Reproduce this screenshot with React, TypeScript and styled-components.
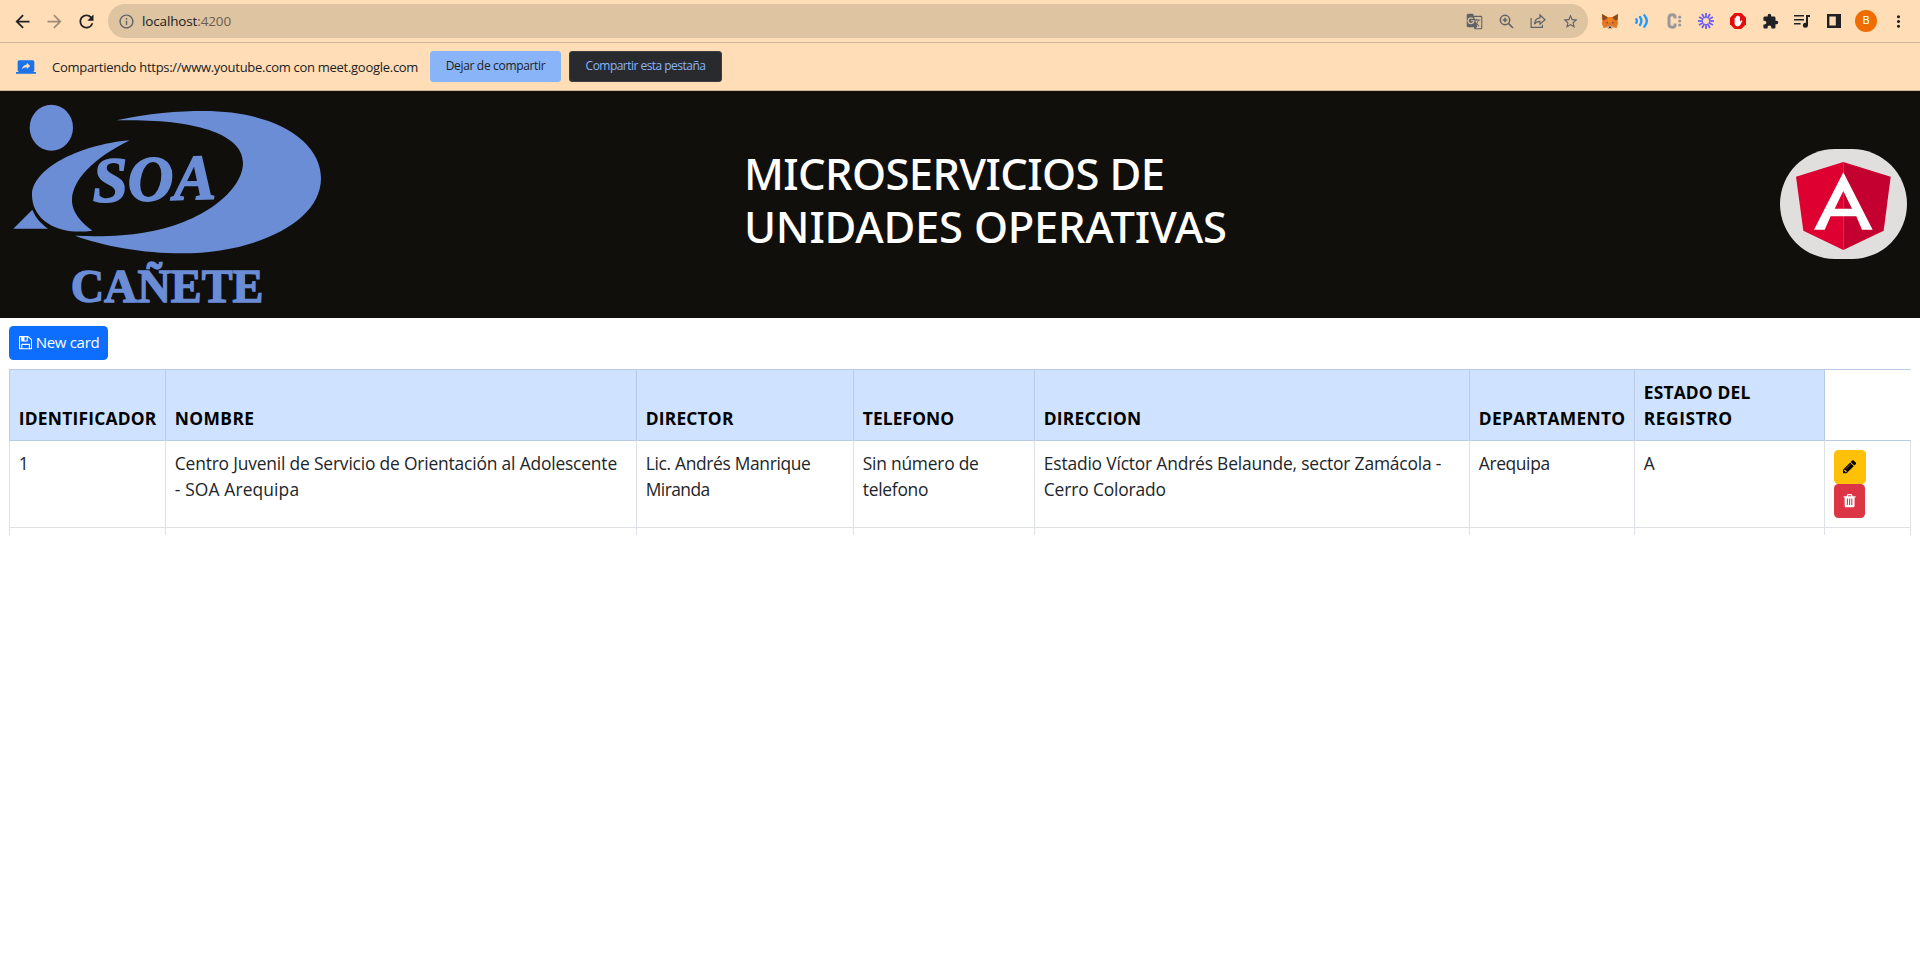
import React from 'react';
import styled, { createGlobalStyle } from 'styled-components';
import {
  MdArrowBack,
  MdArrowForward,
  MdRefresh,
  MdInfoOutline,
  MdGTranslate,
  MdStarBorder,
  MdExtension,
  MdMoreVert,
  MdScreenShare,
} from 'react-icons/md';

const GlobalStyle = createGlobalStyle`
  *, *::before, *::after { box-sizing: border-box; }
  body {
    margin: 0;
    background: #fff;
    color: #212529;
    font-family: "Open Sans", "Noto Sans", sans-serif;
  }
  svg { display: block; flex: none; }
`;

/* ---------- browser chrome ---------- */

const Toolbar = styled.div`
  display: flex;
  align-items: center;
  height: 43px;
  padding: 4px 6px;
  background: #ffddb6;
  border-bottom: 1px solid #cbb497;
`;

const IconSlot = styled.span<{ $color?: string }>`
  display: flex;
  flex: none;
  align-items: center;
  justify-content: center;
  width: 32px;
  height: 34px;
  color: ${(p) => p.$color ?? '#202124'};
`;

const AddressBar = styled.div`
  display: flex;
  flex: 1;
  align-items: center;
  height: 34px;
  margin: 0 6px;
  padding: 0 2px;
  border-radius: 17px;
  background: #dec4a1;
`;

const Url = styled.span`
  flex: 1;
  font-size: 13.5px;
  line-height: 20px;
  letter-spacing: -0.14px;
  color: #202124;
`;

const Port = styled.span`
  color: #6a5f53;
`;

const Avatar = styled.span`
  display: flex;
  align-items: center;
  justify-content: center;
  width: 22px;
  height: 22px;
  border-radius: 50%;
  background: #ef6c00;
  color: #fff;
  font: 400 11.5px/1 Roboto, sans-serif;
`;

const ShareBar = styled.div`
  display: flex;
  align-items: center;
  height: 48px;
  padding: 0 16px;
  background: #ffddb6;
  border-bottom: 1px solid #cbb497;
`;

const ShareText = styled.span`
  margin: 1px 13px 0 16px;
  width: 365px;
  white-space: nowrap;
  font-size: 13px;
  letter-spacing: -0.28px;
  color: #202124;
`;

const ShareButton = styled.button<{ $dark?: boolean }>`
  width: ${(p) => (p.$dark ? 153 : 131)}px;
  height: 31px;
  margin: 0 8px 0 0;
  padding: 0 0 2px;
  border: 1px solid ${(p) => (p.$dark ? '#3c4043' : '#8ab4f8')};
  border-radius: 3px;
  background: ${(p) => (p.$dark ? '#292a2d' : '#8ab4f8')};
  color: ${(p) => (p.$dark ? '#8ab4f8' : '#202124')};
  font: 400 12px "Open Sans", sans-serif;
  letter-spacing: ${(p) => (p.$dark ? -0.53 : -0.33)}px;
  white-space: nowrap;
`;

/* ---------- page banner ---------- */

const Banner = styled.header`
  display: grid;
  grid-template-columns: 744px 1fr 127px;
  align-items: center;
  height: 227px;
  padding-right: 13px;
  background: #110f0b;
`;

const Title = styled.h1`
  margin: 0;
  padding-bottom: 9px;
  color: #fff;
  font: 500 43.5px/53px "Noto Sans", sans-serif;
`;

const TitleLine = styled.span<{ $tracking: number }>`
  display: block;
  white-space: nowrap;
  letter-spacing: ${(p) => p.$tracking}px;
`;

const Badge = styled.div`
  width: 127px;
  height: 110px;
  margin-bottom: 1px;
  border-radius: 55px;
  background: #e1dfdd;
  overflow: hidden;
`;

/* ---------- content ---------- */

const Content = styled.main`
  padding: 8px 9px;
`;

const Button = styled.button<{ $bg: string; $fg?: string; $width: number }>`
  display: flex;
  align-items: center;
  gap: 4px;
  width: ${(p) => p.$width}px;
  height: 34px;
  padding: 0 9.5px;
  border: 0;
  border-radius: 4.4px;
  background: ${(p) => p.$bg};
  color: ${(p) => p.$fg ?? '#fff'};
  font: 400 15px/23px "Open Sans", sans-serif;
  letter-spacing: -0.3px;
  white-space: nowrap;
`;

const ButtonLabel = styled.span`
  padding-bottom: 1px;
`;

const TableFrame = styled.div`
  height: 166px;
  margin-top: 9px;
  overflow: hidden;
`;

const Table = styled.table`
  width: 1902px;
  table-layout: fixed;
  border-collapse: separate;
  border-spacing: 0;
  font-size: 17.4px;
  line-height: 26.4px;
`;

const Col = styled.col<{ $w: number }>`
  width: ${(p) => p.$w}px;
`;

const HeadCell = styled.th<{ $empty?: boolean }>`
  height: 71px;
  padding: 8px 0 9px 8.8px;
  line-height: 26px;
  vertical-align: bottom;
  text-align: left;
  font-weight: 700;
  color: #000;
  background: ${(p) => (p.$empty ? '#fff' : '#cfe2ff')};
  border: solid #bacbe6;
  border-width: 1px 0 0 1px;
`;

const Cell = styled.td<{ $first?: boolean }>`
  height: 87px;
  padding: 9px 0 8px 8.8px;
  vertical-align: top;
  border: solid #dee2e6;
  border-width: 1px 0 0 1px;
  border-top-color: ${(p) => (p.$first ? '#bacbe6' : '#dee2e6')};
  &:last-child { border-right-width: 1px; }
`;

const Phrase = styled.span<{ $tracking: number }>`
  display: block;
  white-space: nowrap;
  letter-spacing: ${(p) => p.$tracking}px;
`;

/* ---------- drawings ---------- */

const BLUE = '#6b8dd6';

const SoaLogo = () => (
  <svg width="340" height="227" viewBox="0 3 1020 681" fill={BLUE}>
    <ellipse cx="154" cy="113" rx="65" ry="69" />
    <path d="M350 91C440 70 540 63 610 63C830 63 963 155 963 265C963 400 760 490 545 490C430 490 310 468 225 437C310 441 380 436 430 428C610 400 729 300 729 218C729 130 580 85 350 91Z" />
    <path d="M389 151C230 165 96 240 96 315C96 385 165 438 277 422C225 385 215 350 216 328C218 270 280 205 389 151Z" />
    <path d="M97 359L40 416H144C122 400 106 382 97 359Z" />
    <text
      x="279"
      y="336"
      transform="rotate(-1.6 279 336)"
      textLength="370"
      lengthAdjust="spacingAndGlyphs"
      fontFamily="Liberation Serif, serif"
      fontWeight="700"
      fontStyle="italic"
      fontSize="192"
      stroke={BLUE}
      strokeWidth="5"
    >
      SOA
    </text>
    <text
      x="212"
      y="635"
      textLength="578"
      lengthAdjust="spacingAndGlyphs"
      fontFamily="Liberation Serif, serif"
      fontWeight="700"
      fontSize="142"
      stroke={BLUE}
      strokeWidth="4"
    >
      CAÑETE
    </text>
  </svg>
);

const AngularLogo = () => (
  <svg width="127" height="110" viewBox="60 57 381 330">
    <path fill="#dd0031" d="M250 96L108 140L130 302L250 360Z" />
    <path fill="#c3002f" d="M250 96L392 140L371 302L250 360Z" />
    <path
      fill="#fff"
      fillRule="evenodd"
      d="M250 127L162 299H194L212 259H289L306 299H338ZM250 183L276 236H224Z"
    />
  </svg>
);

const ZoomIcon = () => (
  <svg width="15" height="15" viewBox="0 0 15 15" fill="none" stroke="currentColor" strokeWidth="1.5">
    <circle cx="6" cy="6" r="4.7" />
    <path d="M9.4 9.4L14 14M3.8 6H8.2M6 3.8V8.2" />
  </svg>
);

const ShareIcon = () => (
  <svg width="16" height="16" viewBox="0 0 16 16" fill="none" stroke="currentColor" strokeWidth="1.2">
    <path d="M1.1 5V14.4H12.4V11.8" />
    <path d="M4.4 11.2C4.9 7.2 7 5 10 4.9V2L15 6.8L10 11.2V8.4C7.6 8.3 5.8 9.2 4.4 11.2Z" />
  </svg>
);

const FoxIcon = () => (
  <svg width="16" height="15" viewBox="0 0 16 15">
    <path fill="#e27625" d="M0 0L5.5 3H10.5L16 0L15.6 6L16 9.5L14.5 14L11 13.2L9.5 14.8H6.5L5 13.2L1.5 14L0 9.5L.4 6Z" />
    <path fill="#8a4a1d" d="M0 0L6 3.4L2.5 6.2L.4 6ZM16 0L10 3.4L13.5 6.2L15.6 6Z" />
    <path fill="#f5841f" d="M5.5 3H10.5L9.6 8.5H6.4Z" />
    <path fill="#d7c1b3" d="M5 12.4L8 11.4L11 12.4L9.5 14.6H6.5Z" />
    <path fill="#2f343b" d="M6.7 12.4H9.3L9 14H7ZM4 8L6 8.8L5.8 9.7ZM12 8L10 8.8L10.2 9.7Z" />
  </svg>
);

const WavesIcon = () => (
  <svg width="14" height="14" viewBox="0 0 14 14" fill="none" stroke="#1a9bff" strokeWidth="2.3" strokeLinecap="round">
    <path d="M1.3 5.2Q2.5 7 1.3 8.8M5 3Q7.8 7 5 11M9.3 1.3Q14.4 7 9.3 12.7" />
  </svg>
);

const CaptionIcon = () => (
  <svg width="15" height="16" viewBox="0 0 15 16">
    <path fill="none" stroke="#999" strokeWidth="3" d="M8 5.5V4Q8 1.8 5.2 1.8T2 4.4V11.6Q2 14.2 5.2 14.2T8 12V10.5" />
    <g fill="#999">
      <circle cx="12.7" cy="4" r="1.6" />
      <circle cx="12.7" cy="8" r="1.6" />
      <circle cx="12.7" cy="12" r="1.6" />
    </g>
  </svg>
);

const BurstIcon = () => (
  <svg width="16" height="16" viewBox="-8 -8 16 16" stroke="#6c5cf5" strokeWidth="1.8">
    {Array.from({ length: 12 }, (_, i) => (
      <line key={i} x1="0" y1="-3" x2="0" y2="-8" transform={`rotate(${i * 30})`} />
    ))}
  </svg>
);

const StopHandIcon = () => (
  <svg width="16" height="16" viewBox="0 0 16 16">
    <path fill="#e40d0d" d="M4.7 0H11.3L16 4.7V11.3L11.3 16H4.7L0 11.3V4.7Z" />
    <path
      fill="#fff"
      d="M4.6 5.2Q5.3 4.5 5.9 5.2V3.6Q6.6 2.8 7.2 3.5V2.9Q7.9 2.1 8.6 2.9V3.5Q9.4 2.8 10 3.7V8.6L11.2 7.4Q12.2 7 12.4 7.8L10.6 11.6Q9.8 13.4 7.8 13.4Q4.6 13.2 4.6 10Z"
    />
  </svg>
);

const PlaylistIcon = () => (
  <svg width="16" height="14" viewBox="0 0 16 14" fill="none" stroke="#202124" strokeWidth="1.6">
    <path d="M0 1.8H10M0 5.8H10M0 9.8H6.6" />
    <path d="M13 11.5V1.9H16" strokeWidth="2" />
    <circle cx="11.4" cy="11.3" r="2.5" fill="#202124" stroke="none" />
  </svg>
);

const SidePanelIcon = () => (
  <svg width="14" height="14" viewBox="0 0 14 14">
    <path fill="#202124" fillRule="evenodd" d="M0 0H14V14H0ZM2.4 2.4V11.6H8.8V2.4Z" />
  </svg>
);

const SaveIcon = () => (
  <svg width="13.2" height="15.4" viewBox="0 0 1536 1792" fill="currentColor">
    <path d="M384 1536h768v-384h-768v384zm896 0h128v-896q0-14-10-38.5t-20-34.5l-281-281q-10-10-34-20t-39-10v416q0 40-28 68t-68 28h-576q-40 0-68-28t-28-68v-416h-128v1280h128v-416q0-40 28-68t68-28h832q40 0 68 28t28 68v416zm-384-928v-320q0-13-9.5-22.5t-22.5-9.5h-192q-13 0-22.5 9.5t-9.5 22.5v320q0 13 9.5 22.5t22.5 9.5h192q13 0 22.5-9.5t9.5-22.5zm640 32v928q0 40-28 68t-68 28h-1344q-40 0-68-28t-28-68v-1344q0-40 28-68t68-28h928q40 0 88 20t76 48l280 280q28 28 48 76t20 88z" />
  </svg>
);

const PencilIcon = () => (
  <svg width="15.4" height="15.4" viewBox="128 0 1792 1792" fill="currentColor">
    <path d="M491 1536l91-91-235-235-91 91v107h128v128h107zm523-928q0-22-22-22-10 0-17 7l-542 542q-7 7-7 17 0 22 22 22 10 0 17-7l542-542q7-7 7-17zm-54-192l416 416-832 832h-416v-416zm683 96q0 53-37 90l-166 166-416-416 166-165q36-38 90-38 53 0 91 38l235 234q37 39 37 91z" />
  </svg>
);

const TrashIcon = () => (
  <svg width="15.4" height="15.4" viewBox="128 0 1792 1792" fill="currentColor">
    <path d="M704 1376v-704q0-14-9-23t-23-9h-64q-14 0-23 9t-9 23v704q0 14 9 23t23 9h64q14 0 23-9t9-23zm256 0v-704q0-14-9-23t-23-9h-64q-14 0-23 9t-9 23v704q0 14 9 23t23 9h64q14 0 23-9t9-23zm256 0v-704q0-14-9-23t-23-9h-64q-14 0-23 9t-9 23v704q0 14 9 23t23 9h64q14 0 23-9t9-23zm-544-992h448l-48-117q-7-9-17-11h-317q-10 2-17 11zm928 32v64q0 14-9 23t-23 9h-96v948q0 83-47 143.5t-113 60.5h-832q-66 0-113-58.5t-47-141.5v-952h-96q-14 0-23-9t-9-23v-64q0-14 9-23t23-9h309l70-167q15-37 54-63t79-26h320q40 0 79 26t54 63l70 167h309q14 0 23 9t9 23z" />
  </svg>
);

/* ---------- data ---------- */

type Text = [text: string, tracking: number];

const columns: { width: number; head: Text[]; value: Text[] }[] = [
  { width: 156, head: [['IDENTIFICADOR', 0.22]], value: [['1', 0]] },
  {
    width: 471,
    head: [['NOMBRE', 0.4]],
    value: [
      ['Centro Juvenil de Servicio de Orientación al Adolescente', -0.175],
      ['- SOA Arequipa', 0.13],
    ],
  },
  {
    width: 217,
    head: [['DIRECTOR', 0.179]],
    value: [['Lic. Andrés Manrique', -0.333], ['Miranda', -0.568]],
  },
  {
    width: 181,
    head: [['TELEFONO', 0.086]],
    value: [['Sin número de', -0.228], ['telefono', -0.271]],
  },
  {
    width: 435,
    head: [['DIRECCION', 0.2]],
    value: [
      ['Estadio Víctor Andrés Belaunde, sector Zamácola -', -0.175],
      ['Cerro Colorado', -0.138],
    ],
  },
  { width: 165, head: [['DEPARTAMENTO', 0.28]], value: [['Arequipa', -0.372]] },
  { width: 190, head: [['ESTADO DEL', 0.163], ['REGISTRO', 0.55]], value: [['A', 0]] },
];

const Phrases = ({ lines }: { lines: Text[] }) => (
  <>
    {lines.map(([text, tracking]) => (
      <Phrase key={text} $tracking={tracking}>
        {text}
      </Phrase>
    ))}
  </>
);

export default function App() {
  return (
    <>
      <GlobalStyle />
      <Toolbar>
        <IconSlot><MdArrowBack size={21} /></IconSlot>
        <IconSlot $color="#a08d78"><MdArrowForward size={21} /></IconSlot>
        <IconSlot><MdRefresh size={21} /></IconSlot>
        <AddressBar>
          <IconSlot $color="#5f6368"><MdInfoOutline size={17} /></IconSlot>
          <Url>localhost<Port>:4200</Port></Url>
          <IconSlot $color="#5f6368"><MdGTranslate size={17} /></IconSlot>
          <IconSlot $color="#5f6368"><ZoomIcon /></IconSlot>
          <IconSlot $color="#5f6368"><ShareIcon /></IconSlot>
          <IconSlot $color="#5f6368"><MdStarBorder size={17} /></IconSlot>
        </AddressBar>
        <IconSlot><FoxIcon /></IconSlot>
        <IconSlot><WavesIcon /></IconSlot>
        <IconSlot><CaptionIcon /></IconSlot>
        <IconSlot><BurstIcon /></IconSlot>
        <IconSlot><StopHandIcon /></IconSlot>
        <IconSlot><MdExtension size={17} /></IconSlot>
        <IconSlot><PlaylistIcon /></IconSlot>
        <IconSlot><SidePanelIcon /></IconSlot>
        <IconSlot><Avatar>B</Avatar></IconSlot>
        <IconSlot><MdMoreVert size={19} /></IconSlot>
      </Toolbar>
      <ShareBar>
        <MdScreenShare size={20} color="#1a73e8" />
        <ShareText>Compartiendo https://www.youtube.com con meet.google.com</ShareText>
        <ShareButton>Dejar de compartir</ShareButton>
        <ShareButton $dark>Compartir esta pestaña</ShareButton>
      </ShareBar>
      <Banner>
        <SoaLogo />
        <Title>
          <TitleLine $tracking={-0.613}>MICROSERVICIOS DE</TitleLine>
          <TitleLine $tracking={-0.228}>UNIDADES OPERATIVAS</TitleLine>
        </Title>
        <Badge><AngularLogo /></Badge>
      </Banner>
      <Content>
        <Button $bg="#0d6efd" $width={99}>
          <SaveIcon />
          <ButtonLabel>New card</ButtonLabel>
        </Button>
        <TableFrame>
          <Table>
            <colgroup>
              {columns.map((c) => <Col key={c.width} $w={c.width} />)}
              <Col $w={87} />
            </colgroup>
            <thead>
              <tr>
                {columns.map((c) => (
                  <HeadCell key={c.width}><Phrases lines={c.head} /></HeadCell>
                ))}
                <HeadCell $empty />
              </tr>
            </thead>
            <tbody>
              <tr>
                {columns.map((c) => (
                  <Cell key={c.width} $first><Phrases lines={c.value} /></Cell>
                ))}
                <Cell $first>
                  <Button $bg="#ffc107" $fg="#000" $width={32} aria-label="Editar"><PencilIcon /></Button>
                  <Button $bg="#dc3545" $width={31} aria-label="Eliminar"><TrashIcon /></Button>
                </Cell>
              </tr>
              <tr>
                {columns.map((c) => <Cell key={c.width} />)}
                <Cell />
              </tr>
            </tbody>
          </Table>
        </TableFrame>
      </Content>
    </>
  );
}
